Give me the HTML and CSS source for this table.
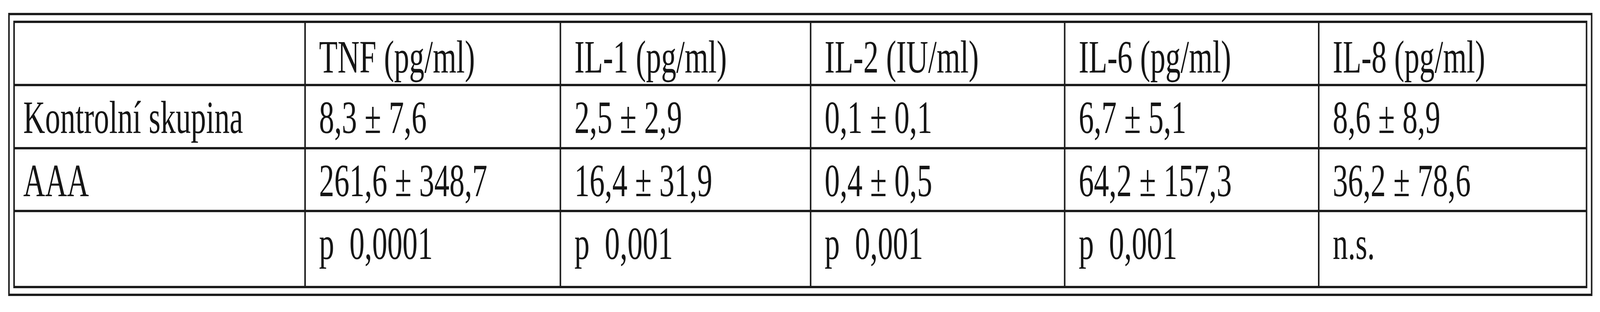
FILE: index.html
```html
<!DOCTYPE html>
<html lang="cs">
<head>
<meta charset="utf-8">
<title>Tabulka</title>
<link rel="stylesheet" href="styles.css">
</head>
<body>
<div class="page">
  <div class="frame">
    <div class="grid">
      <div class="cell head first"></div>
      <div class="cell head">TNF (pg/ml)</div>
      <div class="cell head">IL-1 (pg/ml)</div>
      <div class="cell head">IL-2 (IU/ml)</div>
      <div class="cell head">IL-6 (pg/ml)</div>
      <div class="cell head">IL-8 (pg/ml)</div>

      <div class="cell first">Kontrolní skupina</div>
      <div class="cell">8,3 ± 7,6</div>
      <div class="cell">2,5 ± 2,9</div>
      <div class="cell">0,1 ± 0,1</div>
      <div class="cell">6,7 ± 5,1</div>
      <div class="cell">8,6 ± 8,9</div>

      <div class="cell first">AAA</div>
      <div class="cell">261,6 ± 348,7</div>
      <div class="cell">16,4 ± 31,9</div>
      <div class="cell">0,4 ± 0,5</div>
      <div class="cell">64,2 ± 157,3</div>
      <div class="cell">36,2 ± 78,6</div>

      <div class="cell first"></div>
      <div class="cell">p&nbsp;&nbsp;0,0001</div>
      <div class="cell">p&nbsp;&nbsp;0,001</div>
      <div class="cell">p&nbsp;&nbsp;0,001</div>
      <div class="cell">p&nbsp;&nbsp;0,001</div>
      <div class="cell">n.s.</div>
    </div>
  </div>
</div>
<script src="fit.js"></script>
</body>
</html>
```
FILE: styles.css
```css
html, body {
  margin: 0;
  padding: 0;
  background: #ffffff;
}

body {
  font-family: "Liberation Serif", "Times New Roman", serif;
  color: #151515;
}

.page {
  width: 100%;
  height: 800px;
  overflow: hidden;
}

.frame {
  box-sizing: border-box;
  width: 6217px;
  margin: 33px 0 0 21px;
  border: 6px solid #1c1c1c;
  padding: 14px;
  transform-origin: 0 0;
  transform: scaleX(var(--fit-x, 1));
}

.grid {
  display: grid;
  grid-template-columns: 1136px 996px 976px 991px 991px 1045px;
  grid-template-rows: 156px 156px 155px 189px;
  gap: 6px;
  padding: 6px;
  background: #1c1c1c;
}

.cell {
  background: #ffffff;
  font-size: 119px;
  line-height: 119px;
  padding: 21px 0 0 52px;
  white-space: nowrap;
  overflow: hidden;
}

.cell.head {
  padding-top: 28px;
}

.cell.first {
  padding-left: 33px;
}
```
FILE: fit.js
```js
(function () {
  var design = 6279;
  function fit() {
    var w = document.documentElement.clientWidth || window.innerWidth;
    var s = w < design ? w / design : 1;
    document.documentElement.style.setProperty('--fit-x', s);
  }
  fit();
  window.addEventListener('resize', fit);
})();
```
